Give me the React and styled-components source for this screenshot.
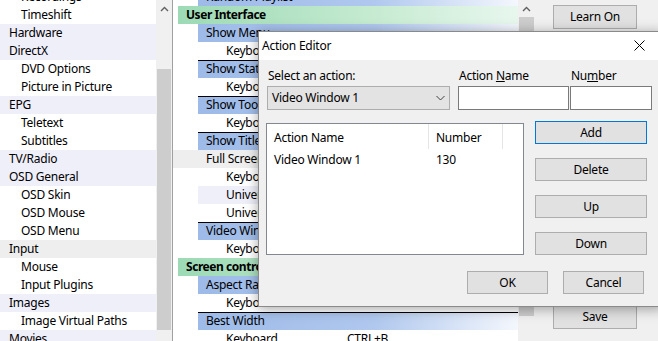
import styled, { createGlobalStyle } from 'styled-components'

const GlobalStyle = createGlobalStyle`
  html, body {
    margin: 0;
    padding: 0;
    background: #ffffff;
  }
  body {
    width: 658px;
    height: 341px;
    overflow: hidden;
    font-family: 'Segoe UI', 'Noto Sans', sans-serif;
    font-size: 12px;
    letter-spacing: -0.25px;
    color: #000000;
  }
`

const leftRows = [
  { label: 'Recordings', level: 1 },
  { label: 'Timeshift', level: 1 },
  { label: 'Hardware', level: 0, tone: 'cat' },
  { label: 'DirectX', level: 0, tone: 'cat' },
  { label: 'DVD Options', level: 1 },
  { label: 'Picture in Picture', level: 1 },
  { label: 'EPG', level: 0, tone: 'cat' },
  { label: 'Teletext', level: 1 },
  { label: 'Subtitles', level: 1 },
  { label: 'TV/Radio', level: 0, tone: 'cat' },
  { label: 'OSD General', level: 0, tone: 'cat' },
  { label: 'OSD Skin', level: 1 },
  { label: 'OSD Mouse', level: 1 },
  { label: 'OSD Menu', level: 1 },
  { label: 'Input', level: 0, tone: 'selected' },
  { label: 'Mouse', level: 1 },
  { label: 'Input Plugins', level: 1 },
  { label: 'Images', level: 0, tone: 'cat' },
  { label: 'Image Virtual Paths', level: 1 },
  { label: 'Movies', level: 0, tone: 'cat' },
]

const treeRows = [
  { label: 'Random Playlist', kind: 'item' },
  { label: 'User Interface', kind: 'cat' },
  { label: 'Show Menu', kind: 'item' },
  { label: 'Keyboard', kind: 'key' },
  { label: 'Show Status', kind: 'item', rule: true },
  { label: 'Keyboard', kind: 'key' },
  { label: 'Show Toolbar', kind: 'item', rule: true },
  { label: 'Keyboard', kind: 'key' },
  { label: 'Show Title', kind: 'item', rule: true },
  { label: 'Full Screen', kind: 'selected' },
  { label: 'Keyboard', kind: 'key' },
  { label: 'Universal', kind: 'hover' },
  { label: 'Universal', kind: 'key' },
  { label: 'Video Window', kind: 'item', rule: true },
  { label: 'Keyboard', kind: 'key' },
  { label: 'Screen control', kind: 'cat' },
  { label: 'Aspect Ratio', kind: 'item' },
  { label: 'Keyboard', kind: 'key', value: 'CTRL+A' },
  { label: 'Best Width', kind: 'item', rule: true },
  { label: 'Keyboard', kind: 'key', value: 'CTRL+B' },
]

const ChevronUp = () => (
  <svg width='9' height='6' viewBox='0 0 9 6'>
    <polyline points='1,5 4.5,1.5 8,5' fill='none' stroke='#606060' strokeWidth='1.4' />
  </svg>
)

const ChevronDown = () => (
  <svg width='9' height='6' viewBox='0 0 9 6'>
    <polyline points='0.5,1 4.5,5 8.5,1' fill='none' stroke='#404040' strokeWidth='1' />
  </svg>
)

const CloseIcon = () => (
  <svg width='11' height='11' viewBox='0 0 11 11'>
    <path d='M0.5 0.5 L10.5 10.5 M10.5 0.5 L0.5 10.5' stroke='#000' strokeWidth='1' />
  </svg>
)

const App = () => {
  return (
    <>
      <GlobalStyle />
      <Screen>
        <LeftPanel>
          <ScrollList>
            {leftRows.map(row => (
              <LeftRow key={row.label} $level={row.level} $tone={row.tone}>
                {row.label}
              </LeftRow>
            ))}
          </ScrollList>
        </LeftPanel>
        <ScrollBar $thumbTop={69} $thumbBottom={11} $edge>
          <ArrowCell>
            <ChevronUp />
          </ArrowCell>
          <Track>
            <Thumb />
          </Track>
        </ScrollBar>

        <TreePanel>
          <ScrollList>
            {treeRows.map((row, i) => (
              <TreeRow key={i} $kind={row.kind} $rule={row.rule}>
                <TreeLabel $kind={row.kind}>{row.label}</TreeLabel>
                {row.value && <span>{row.value}</span>}
              </TreeRow>
            ))}
          </ScrollList>
        </TreePanel>
        <ScrollBar $thumbTop={17} $thumbBottom={25}>
          <ArrowCell>
            <ChevronUp />
          </ArrowCell>
          <Track>
            <Thumb />
          </Track>
        </ScrollBar>

        <SidePanel>
          <PushButton $wide>Learn On</PushButton>
          <PushButton $wide>Save</PushButton>
        </SidePanel>

        <Dialog>
          <TitleBar>
            <TitleText>Action Editor</TitleText>
            <CloseBox>
              <CloseIcon />
            </CloseBox>
          </TitleBar>
          <DialogBody>
            <FormRow>
              <Field $w={183} $gap={1}>
                <FieldLabel>Select an action:</FieldLabel>
                <Combo>
                  <span>Video Window 1</span>
                  <ChevronDown />
                </Combo>
              </Field>
              <Field $w={111} $gap={8}>
                <FieldLabel>
                  Action <u>N</u>ame
                </FieldLabel>
                <TextBox />
              </Field>
              <Field $w={82} $gap={1}>
                <FieldLabel>
                  Nu<u>m</u>ber
                </FieldLabel>
                <TextBox />
              </Field>
            </FormRow>

            <MiddleRow>
              <ListView>
                <ListHeader>
                  <HeaderCell $w={162}>Action Name</HeaderCell>
                  <HeaderCell $w={74}>Number</HeaderCell>
                </ListHeader>
                <ListItem>
                  <ListCell $w={162}>Video Window 1</ListCell>
                  <ListCell $w={74}>130</ListCell>
                </ListItem>
              </ListView>
              <ButtonColumn>
                <PushButton $default>Add</PushButton>
                <PushButton>Delete</PushButton>
                <PushButton>Up</PushButton>
                <PushButton>Down</PushButton>
              </ButtonColumn>
            </MiddleRow>

            <FooterRow>
              <PushButton $small>OK</PushButton>
              <PushButton $small>Cancel</PushButton>
            </FooterRow>
          </DialogBody>
        </Dialog>
      </Screen>
    </>
  )
}

export default App

const Screen = styled.div`
  position: relative;
  width: 658px;
  height: 341px;
  display: flex;
  overflow: hidden;
  background: #ffffff;
`

const LeftPanel = styled.div`
  width: 156px;
  flex: none;
  overflow: hidden;
`

const ScrollList = styled.div`
  margin-top: -12px;
`

const LeftRow = styled.div`
  height: 18px;
  line-height: 18px;
  padding-left: ${p => (p.$level ? 21 : 9)}px;
  white-space: nowrap;
  background: ${p =>
    p.$tone === 'cat' ? '#efeffa' : p.$tone === 'selected' ? '#eeeeee' : 'transparent'};
`

const ScrollBar = styled.div`
  width: 17px;
  flex: none;
  display: flex;
  flex-direction: column;
  background: #f0f0f0;
  box-sizing: border-box;
  border-right: ${p => (p.$edge ? '1px solid #a0a0a0' : 'none')};

  --thumb-top: ${p => p.$thumbTop - 17}px;
  --thumb-bottom: ${p => p.$thumbBottom}px;
`

const ArrowCell = styled.div`
  height: 17px;
  display: flex;
  align-items: center;
  justify-content: center;
`

const Track = styled.div`
  flex: 1;
  display: flex;
  flex-direction: column;
  padding: var(--thumb-top) 1px var(--thumb-bottom);
`

const Thumb = styled.div`
  flex: 1;
  background: #cdcdcd;
`

const TreePanel = styled.div`
  width: 345px;
  flex: none;
  overflow: hidden;
`

const rowBackground = kind => {
  if (kind === 'cat') return 'linear-gradient(to right, #9cdab5 0%, #c4eacf 55%, #e8f7ee 100%)'
  if (kind === 'item') return 'linear-gradient(to right, #9dbae8 0%, #b0c8ee 55%, #f4f7fd 100%)'
  if (kind === 'selected') return '#eeeeee'
  if (kind === 'hover') return '#efeffa'
  return 'transparent'
}

const TreeRow = styled.div`
  height: 18px;
  line-height: ${p => (p.$rule ? 16 : 18)}px;
  box-sizing: border-box;
  display: flex;
  white-space: nowrap;
  margin-left: ${p => (p.$kind === 'cat' ? 5 : p.$kind === 'selected' ? 0 : 25)}px;
  padding-left: ${p =>
    p.$kind === 'cat' ? 8 : p.$kind === 'selected' ? 33 : p.$kind === 'item' ? 8 : 28}px;
  border-top: ${p => (p.$rule ? '1px solid #000000' : 'none')};
  font-weight: ${p => (p.$kind === 'cat' ? 700 : 400)};
  letter-spacing: ${p => (p.$kind === 'cat' ? '-0.45px' : '-0.25px')};
  background: ${p => rowBackground(p.$kind)};
`

const TreeLabel = styled.span`
  width: ${p => (p.$kind === 'key' ? '121px' : 'auto')};
  flex: none;
`

const SidePanel = styled.div`
  flex: 1;
  background: #f0f0f0;
  display: flex;
  flex-direction: column;
  justify-content: space-between;
  padding: 5px 0 12px 18px;
`

const PushButton = styled.div`
  box-sizing: border-box;
  width: ${p => (p.$wide ? 84 : p.$small ? 81 : 112)}px;
  height: ${p => (p.$wide ? 24 : 23)}px;
  display: flex;
  align-items: center;
  justify-content: center;
  background: #e1e1e1;
  border: 1px solid ${p => (p.$default ? '#0078d7' : '#adadad')};
  padding-bottom: 1px;
`

const Dialog = styled.div`
  position: absolute;
  left: 258px;
  top: 31px;
  width: 406px;
  height: 276px;
  box-sizing: border-box;
  border: 1px solid #8a8a8a;
  background: #f0f0f0;
  box-shadow: 0 2px 12px rgba(0, 0, 0, 0.35);
  display: flex;
  flex-direction: column;
`

const TitleBar = styled.div`
  height: 28px;
  flex: none;
  background: #ffffff;
  display: flex;
  align-items: center;
  justify-content: space-between;
`

const TitleText = styled.div`
  padding-left: 3px;
  padding-bottom: 1px;
`

const CloseBox = styled.div`
  width: 45px;
  height: 28px;
  display: flex;
  align-items: center;
  justify-content: center;
  margin-right: 1px;
  padding-bottom: 2px;
  box-sizing: border-box;
`

const DialogBody = styled.div`
  flex: 1;
  padding: 7px 0 0 7px;
  display: flex;
  flex-direction: column;
`

const FormRow = styled.div`
  display: flex;
`

const Field = styled.div`
  width: ${p => p.$w}px;
  margin-left: ${p => p.$gap}px;
  display: flex;
  flex-direction: column;
  gap: 1px;
`

const FieldLabel = styled.div`
  height: 18px;
  line-height: 18px;
  padding-left: 1px;
  white-space: nowrap;
`

const Combo = styled.div`
  height: 24px;
  box-sizing: border-box;
  background: #e3e3e3;
  border: 1px solid #adadad;
  display: flex;
  align-items: center;
  justify-content: space-between;
  padding: 0 4px 1px 4px;
`

const TextBox = styled.div`
  height: 24px;
  box-sizing: border-box;
  background: #ffffff;
  border: 1px solid #7a7a7a;
`

const MiddleRow = styled.div`
  display: flex;
  gap: 11px;
  margin-top: 13px;
`

const ListView = styled.div`
  width: 258px;
  height: 132px;
  box-sizing: border-box;
  background: #ffffff;
  border: 1px solid #828790;
`

const ListHeader = styled.div`
  height: 25px;
  display: flex;
`

const HeaderCell = styled.div`
  width: ${p => p.$w}px;
  box-sizing: border-box;
  padding: 2px 0 0 7px;
  line-height: 23px;
  border-right: 1px solid #e5e5e5;
`

const ListItem = styled.div`
  height: 22px;
  display: flex;
`

const ListCell = styled.div`
  width: ${p => p.$w}px;
  padding-left: 7px;
  box-sizing: border-box;
  line-height: 22px;
`

const ButtonColumn = styled.div`
  display: flex;
  flex-direction: column;
  gap: 14px;
  margin-top: -2px;
`

const FooterRow = styled.div`
  display: flex;
  gap: 15px;
  margin-top: 16px;
  padding-left: 201px;
`
